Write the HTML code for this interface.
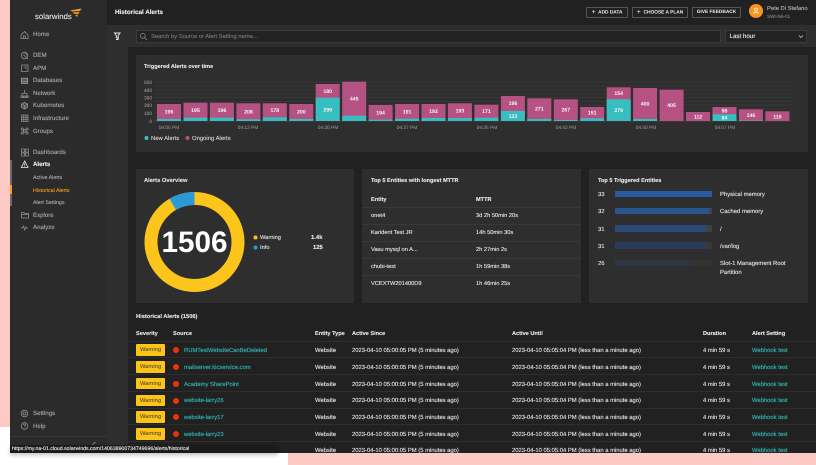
<!DOCTYPE html>
<html><head><meta charset="utf-8"><style>
*{box-sizing:border-box}
html,body{margin:0;padding:0;width:816px;height:465px;overflow:hidden;background:#fff;font-family:"Liberation Sans",sans-serif;text-rendering:geometricPrecision}
body{filter:blur(.25px)}
.a{position:absolute}
.t{position:absolute;white-space:nowrap;line-height:8px;height:8px;font-size:5.85px;color:#e8e8e8;margin-top:1.7px;-webkit-text-stroke:.1px currentColor}
.n{font-size:6.1px;color:#adadad;left:33px;margin-top:.8px}
.b{font-weight:bold}
.btn{position:absolute;top:7px;height:11px;border:1px solid #555;border-radius:1px;color:#eee;font-size:4.8px;font-weight:bold;line-height:9.5px;text-align:center;white-space:nowrap}
.btn span{font-size:7px;font-weight:normal;vertical-align:-.6px}
.panel{position:absolute;background:#2e2e2e}
.line{position:absolute;height:1px;background:#383838}
.r{position:absolute;left:128px;width:688px;height:17px;border-bottom:1px solid #2e2e2e}
.r .t{top:4.1px;font-size:5.85px}
.w{position:absolute;left:8px;top:3px;width:29px;height:11.5px;background:#fcc419;border-radius:1px;color:#333;font-size:5.7px;line-height:12px;text-align:center}
.d{position:absolute;left:45px;top:6px;width:6px;height:6px;border-radius:50%;background:#e8340c}
.l{color:#2fb3b0!important;-webkit-text-stroke:.16px #2fb3b0}
svg text{font-family:"Liberation Sans",sans-serif;text-rendering:geometricPrecision}
</style></head><body>
<div class="a" style="left:0;top:0;width:816px;height:465px;background:#fff"></div>
<div class="a" style="left:0;top:0;width:10px;height:427px;background:#fdc9c4"></div>
<div class="a" style="left:288px;top:453px;width:528px;height:12px;background:#fdc9c4"></div>
<div class="a" style="left:10px;top:0;width:806px;height:453px;overflow:hidden;background:#212121"></div>

<!-- sidebar -->
<div class="a" style="left:10px;top:0;width:97px;height:445px;background:#2b2b2b"></div>
<div class="a" style="left:10px;top:436px;width:97px;height:1px;background:#383838"></div>
<div class="a" style="left:107px;top:25px;width:21px;height:428px;background:#2e2e2e"></div>
<div class="a" style="left:10px;top:160px;width:2px;height:46px;background:#6a6a6a"></div>
<div class="a" style="left:10px;top:185px;width:2px;height:9px;background:#f99d1c"></div>

<div class="t" style="left:35px;top:11.5px;font-size:7.8px;color:#e6e6e6">solarwinds</div>
<svg class="a" style="left:69px;top:7px" width="14" height="12" viewBox="0 0 14 12"><path d="M1 3.500L12.500 1.500L11 4L3 4.500ZM3.500 5.500L10.500 5L9.500 7L5 6.800ZM6 8L9 7.800L8 10Z" fill="#f99d1c"/></svg>

<div class="t n" style="top:30px">Home</div>
<div class="t n" style="top:51px">DEM</div>
<div class="t n" style="top:64px">APM</div>
<div class="t n" style="top:76.5px">Databases</div>
<div class="t n" style="top:89px">Network</div>
<div class="t n" style="top:101.5px">Kubernetes</div>
<div class="t n" style="top:114px">Infrastructure</div>
<div class="t n" style="top:127px">Groups</div>
<div class="t n" style="top:148px">Dashboards</div>
<div class="t n b" style="top:160.5px;color:#eee">Alerts</div>
<div class="t n" style="top:173px;font-size:5.3px">Active Alerts</div>
<div class="t n" style="top:186px;font-size:5.3px;color:#f99d1c">Historical Alerts</div>
<div class="t n" style="top:198.5px;font-size:5.3px">Alert Settings</div>
<div class="t n" style="top:211px">Explore</div>
<div class="t n" style="top:223.5px">Analyze</div>
<div class="t n" style="top:409px">Settings</div>
<div class="t n" style="top:422px">Help</div>

<svg class="a" style="left:0;top:0" width="816" height="465" viewBox="0 0 816 465">
<g fill="none" stroke="#8e8e8e" stroke-width=".8">
<path d="M21 35L24.500 31.500L28 35V38.500H21ZM23.500 38.500V36H25.500V38.500"/>
<circle cx="24.500" cy="55.500" r="3.300"/><path d="M23 54.500L28 59M24.500 53.500a2 2 0 0 1 2 2"/>
<rect x="21.500" y="65" width="6.500" height="6.500"/><path d="M23.500 67H26V69.500"/>
<path d="M21.500 78.300h6v5h-6zM21.500 80h6M21.500 81.700h6" stroke-width="1.100"/>
<path d="M24.500 90v3M22 96v-2.500h5V96M21 96h2v1.500h-2zM23.800 96h1.600v1.500h-1.600zM26.200 96h2v1.500h-2z"/>
<path d="M24.500 102.500l3 1.500v3.500l-3 1.500-3-1.500v-3.500zM21.500 104l3 1.500 3-1.500M24.500 105.500v3.500" fill="#8e8e8e" fill-opacity=".4"/>
<path d="M21.500 115h6.500v6.500h-6.500zM21.500 117.200h6.500M21.500 119.400h6.500M23.700 115v6.500M25.900 115v6.500"/>
<circle cx="24.700" cy="131" r="1.300"/><circle cx="22.300" cy="129" r="1.100"/><circle cx="27" cy="129" r="1.100"/><circle cx="22.300" cy="133" r="1.100"/><circle cx="27" cy="133" r="1.100"/>
<path d="M21.500 149h3v3h-3zM25.500 149h3v3h-3zM21.500 153h3v3h-3zM25.500 153h3v3h-3z"/>
<path d="M24.700 161L28 167.500H21.300ZM24.700 163.300V165.500M24.700 166v.6" stroke="#eee"/>
<path d="M21.500 212.500h2.500l.7 1h3.800v4.500h-7zM21.500 214.500h7"/>
<path d="M21 228h1.500l1-2 1.300 4 1-3 .7 1H28"/>
<circle cx="24.500" cy="413.500" r="3.300"/><circle cx="24.500" cy="413.500" r="1.500"/>
<circle cx="24.500" cy="426" r="3.300"/><path d="M23.500 425a1 1 0 1 1 1.300 1l-.3.500M24.500 427.500v.4"/>
<path d="M92.500 444.500l3-2.500" stroke="#aaa"/>
</g>
</svg>

<!-- top bar -->
<div class="t b" style="left:115px;top:7.500px;font-size:6.3px;color:#eee">Historical Alerts</div>
<div class="btn" style="left:586px;width:42px"><span>+</span>&nbsp; ADD DATA</div>
<div class="btn" style="left:632px;width:56px"><span>+</span>&nbsp; CHOOSE A PLAN</div>
<div class="btn" style="left:692px;width:49px">GIVE FEEDBACK</div>
<div class="a" style="left:749px;top:4px;width:14px;height:14px;border-radius:50%;background:#f7941d"></div>
<svg class="a" style="left:752px;top:7px" width="8" height="8" viewBox="0 0 8 8"><circle cx="4" cy="2.600" r="1.500" fill="none" stroke="#fff" stroke-width=".7"/><path d="M1.800 7V5.500h4.400V7" fill="none" stroke="#fff" stroke-width=".7"/></svg>
<div class="t" style="left:767px;top:3.500px;font-size:5.800px;color:#bbb">Pete Di Stefano</div>
<div class="t" style="left:767px;top:11.500px;font-size:4.600px;color:#888">SWI-NA-01</div>

<!-- filter row -->
<div class="a" style="left:107px;top:25px;width:709px;height:22px;background:#2e2e2e"></div>
<svg class="a" style="left:0;top:0" width="816" height="60" viewBox="0 0 816 60"><path d="M114.500 33h5.500l-1.800 2.500v3l-1.900-.8v-2.200zM116 39.500h2.500" fill="none" stroke="#e8e8e8" stroke-width="1"/></svg>
<div class="a" style="left:136px;top:30px;width:585px;height:13px;background:#232323;border:1px solid #3a3a3a"></div>
<svg class="a" style="left:139px;top:32px" width="9" height="9" viewBox="0 0 9 9"><circle cx="3.800" cy="3.800" r="2.400" fill="none" stroke="#888" stroke-width=".8"/><path d="M5.600 5.600L8 8" stroke="#888" stroke-width=".8"/></svg>
<div class="t" style="left:151px;top:31.100px;font-size:5.800px;color:#7c7c7c">Search by Source or Alert Setting name...</div>
<div class="a" style="left:725px;top:30px;width:82px;height:13px;background:#232323;border:1px solid #3a3a3a"></div>
<div class="t" style="left:729.500px;top:31.100px;font-size:6.200px;color:#eee">Last hour</div>
<svg class="a" style="left:798px;top:34px" width="6" height="5" viewBox="0 0 6 5"><path d="M1 1.500L3 3.500L5 1.500" fill="none" stroke="#bbb" stroke-width=".8"/></svg>

<!-- panels -->
<div class="panel" style="left:136px;top:55px;width:672px;height:97px"></div>
<div class="panel" style="left:136px;top:169px;width:218px;height:134px"></div>
<div class="panel" style="left:362px;top:169px;width:219px;height:134px"></div>
<div class="panel" style="left:589px;top:169px;width:219px;height:134px"></div>

<div class="t b" style="left:144px;top:61.500px;font-size:5.600px">Triggered Alerts over time</div>
<div class="t b" style="left:144px;top:175px;font-size:5.750px">Alerts Overview</div>
<div class="t b" style="left:371px;top:175px;font-size:5.600px">Top 5 Entities with longest MTTR</div>
<div class="t b" style="left:598px;top:175px;font-size:5.600px">Top 5 Triggered Entities</div>

<svg class="a" style="left:0;top:0" width="816" height="465" viewBox="0 0 816 465">
<g stroke="#434343" stroke-width=".6">
<path d="M154 82H793M154 90H793M154 97.500H793M154 105H793M154 113H793"/>
<path d="M154 86H793M154 93.800H793M154 101.300H793M154 109H793M154 117H793" stroke="#3a3a3a"/>
<path d="M154 121H793" stroke="#555"/>
</g>
<g font-size="4.800" fill="#a8a8a8" text-anchor="end">
<text x="152" y="84">500</text><text x="152" y="92">400</text><text x="152" y="99.500">300</text><text x="152" y="107">200</text><text x="152" y="115">100</text><text x="152" y="123">0</text>
</g>
<g font-size="4.800" fill="#a0a0a0" text-anchor="middle">
<text x="169" y="129">04:05 PM</text><text x="248" y="129">04:12 PM</text><text x="328" y="129">04:20 PM</text><text x="407" y="129">04:27 PM</text><text x="487" y="129">04:35 PM</text><text x="566" y="129">04:42 PM</text><text x="646" y="129">04:50 PM</text><text x="725" y="129">04:57 PM</text>
</g>
<g fill="#b65283">
<rect x="157" y="104" width="24" height="17"/><rect x="183.500" y="102.700" width="24" height="18.300"/><rect x="209.900" y="102.700" width="24" height="18.300"/><rect x="236.400" y="103.300" width="24" height="17.700"/><rect x="262.800" y="103.300" width="24" height="17.700"/><rect x="289.300" y="104" width="24" height="17"/><rect x="315.700" y="84" width="24" height="37"/><rect x="342.200" y="81.700" width="24" height="39.300"/><rect x="368.600" y="105" width="24" height="16"/><rect x="395.100" y="104" width="24" height="17"/><rect x="421.500" y="104" width="24" height="17"/><rect x="447.900" y="103.300" width="24" height="17.700"/><rect x="474.400" y="104.700" width="24" height="16.300"/><rect x="500.900" y="96" width="24" height="25"/><rect x="527.300" y="98.300" width="24" height="22.700"/><rect x="553.800" y="99.300" width="24" height="21.700"/><rect x="580.200" y="107" width="24" height="14"/><rect x="606.700" y="87.300" width="24" height="33.700"/><rect x="633.100" y="88" width="24" height="33"/><rect x="659.600" y="89.700" width="24" height="31.300"/><rect x="686" y="112" width="24" height="9"/><rect x="712.500" y="107" width="24" height="14"/><rect x="738.900" y="109.300" width="24" height="11.700"/><rect x="765.400" y="111.300" width="24" height="9.700"/>
</g>
<g fill="#38bec0">
<rect x="157" y="119" width="24" height="2"/><rect x="183.500" y="117.700" width="24" height="3.300"/><rect x="209.900" y="117.700" width="24" height="3.300"/><rect x="236.400" y="119.300" width="24" height="1.700"/><rect x="262.800" y="117.300" width="24" height="3.700"/><rect x="289.300" y="119" width="24" height="2"/><rect x="315.700" y="97.700" width="24" height="23.300"/><rect x="342.200" y="115.700" width="24" height="5.300"/><rect x="368.600" y="119.700" width="24" height="1.300"/><rect x="395.100" y="118.700" width="24" height="2.300"/><rect x="421.500" y="118" width="24" height="3"/><rect x="447.900" y="118" width="24" height="3"/><rect x="474.400" y="117.700" width="24" height="3.300"/><rect x="500.900" y="111" width="24" height="10"/><rect x="527.300" y="119" width="24" height="2"/><rect x="553.800" y="120" width="24" height="1"/><rect x="580.200" y="118.300" width="24" height="2.700"/><rect x="606.700" y="99.300" width="24" height="21.700"/><rect x="633.100" y="119" width="24" height="2"/><rect x="712.500" y="114.300" width="24" height="6.700"/><rect x="738.900" y="120" width="24" height=".8" fill="#7a8a9a"/>
</g>
<g font-size="5.200" fill="#f4f4f4" text-anchor="middle" font-weight="bold">
<text x="169" y="113.500">196</text><text x="195.500" y="112">195</text><text x="222" y="112">196</text><text x="248.400" y="113.300">208</text><text x="274.800" y="112">178</text><text x="301.300" y="113.500">200</text><text x="327.700" y="92.800">180</text><text x="327.700" y="111.500">299</text><text x="354.200" y="100.500">445</text><text x="380.600" y="114.300">194</text><text x="407.100" y="113.300">191</text><text x="433.500" y="113">192</text><text x="459.900" y="112.700">193</text><text x="486.400" y="113">171</text><text x="512.900" y="105">196</text><text x="512.900" y="118">123</text><text x="539.300" y="110.500">271</text><text x="565.800" y="111.500">267</text><text x="592.200" y="114.500">151</text><text x="618.700" y="95">154</text><text x="618.700" y="112">279</text><text x="645.100" y="105.500">400</text><text x="671.600" y="107">405</text><text x="698" y="118.500">112</text><text x="724.500" y="112.700">98</text><text x="724.500" y="119.700">84</text><text x="750.900" y="117">146</text><text x="777.400" y="118.500">119</text>
</g>
<circle cx="146.500" cy="138" r="2" fill="#38bec0"/><circle cx="187.500" cy="138" r="2" fill="#b65283"/>
<circle cx="194.500" cy="242" r="43.500" fill="none" stroke="#fbc51c" stroke-width="13"/>
<path d="M194.500 198.500A43.500 43.500 0 0 0 172.750 204.330" fill="none" stroke="#2b9ad4" stroke-width="13"/>
<circle cx="255.500" cy="237.500" r="2" fill="#fbc51c"/><circle cx="255.500" cy="247.500" r="2" fill="#2b9ad4"/>
</svg>

<div class="t" style="left:151px;top:133.500px;font-size:5.900px;color:#d8d8d8">New Alerts</div>
<div class="t" style="left:192px;top:133.500px;font-size:5.900px;color:#d8d8d8">Ongoing Alerts</div>

<div class="a b" style="left:152px;top:227px;width:85px;text-align:center;font-size:29.700px;line-height:32px;color:#fff;font-weight:bold">1506</div>
<div class="t" style="left:260px;top:232.500px;font-size:5.700px">Warning</div>
<div class="t" style="left:260px;top:242.500px;font-size:5.700px">Info</div>
<div class="t b" style="left:311px;top:232.500px;font-size:5.900px">1.4k</div>
<div class="t b" style="left:313px;top:242.500px;font-size:5.900px">125</div>

<!-- MTTR -->
<div class="t b" style="left:371px;top:194.500px;font-size:5.600px">Entity</div>
<div class="t b" style="left:476px;top:194.500px;font-size:5.600px">MTTR</div>
<div class="line" style="left:362px;top:207px;width:219px"></div>
<div class="line" style="left:362px;top:224px;width:219px"></div>
<div class="line" style="left:362px;top:241px;width:219px"></div>
<div class="line" style="left:362px;top:258px;width:219px"></div>
<div class="line" style="left:362px;top:275px;width:219px"></div>
<div class="t" style="left:371px;top:210px;font-size:5.700px">onet4</div><div class="t" style="left:476px;top:210.500px;font-size:5.700px">3d 2h 50min 20s</div>
<div class="t" style="left:371px;top:227px;font-size:5.700px">Karident Test JR</div><div class="t" style="left:476px;top:227.500px;font-size:5.700px">14h 50min 30s</div>
<div class="t" style="left:371px;top:244px;font-size:5.700px">Vasu mysql on A...</div><div class="t" style="left:476px;top:244.500px;font-size:5.700px">2h 27min 2s</div>
<div class="t" style="left:371px;top:261px;font-size:5.700px">chubi-test</div><div class="t" style="left:476px;top:261.500px;font-size:5.700px">1h 59min 38s</div>
<div class="t" style="left:371px;top:278px;font-size:5.700px">VCEXTW201400D9</div><div class="t" style="left:476px;top:278.500px;font-size:5.700px">1h 46min 25s</div>

<!-- Top 5 -->
<div class="a" style="left:615px;top:190.500px;width:97px;height:6.500px;background:#2a5b9e"></div>
<div class="a" style="left:615px;top:207.500px;width:97px;height:6.500px;background:#444"></div><div class="a" style="left:615px;top:207.500px;width:94px;height:6.500px;background:#2a558f"></div>
<div class="a" style="left:615px;top:225px;width:97px;height:6.500px;background:#404040"></div><div class="a" style="left:615px;top:225px;width:91px;height:6.500px;background:#2c4a78"></div>
<div class="a" style="left:615px;top:242px;width:97px;height:6.500px;background:#383838"></div><div class="a" style="left:615px;top:242px;width:91px;height:6.500px;background:#2a3b5c"></div>
<div class="a" style="left:615px;top:259.500px;width:97px;height:6.500px;background:#333"></div><div class="a" style="left:615px;top:259.500px;width:77px;height:6.500px;background:#2f3541"></div>
<div class="t" style="left:598px;top:189.500px;font-size:5.900px">33</div><div class="t" style="left:720px;top:189.500px;font-size:5.900px">Physical memory</div>
<div class="t" style="left:598px;top:206.500px;font-size:5.900px">32</div><div class="t" style="left:720px;top:206.500px;font-size:5.900px">Cached memory</div>
<div class="t" style="left:598px;top:224px;font-size:5.900px">31</div><div class="t" style="left:720px;top:224px;font-size:5.900px">/</div>
<div class="t" style="left:598px;top:241px;font-size:5.900px">31</div><div class="t" style="left:720px;top:241px;font-size:5.900px">/var/log</div>
<div class="t" style="left:598px;top:258.500px;font-size:5.900px">26</div><div class="t" style="left:720px;top:258.500px;font-size:5.900px">Slot-1 Management Root</div>
<div class="t" style="left:720px;top:267.500px;font-size:5.900px">Partition</div>

<!-- table -->
<div class="t b" style="left:136px;top:311.500px;font-size:5.700px">Historical Alerts (1506)</div>
<div class="t b" style="left:136px;top:328.500px;font-size:5.600px">Severity</div>
<div class="t b" style="left:173px;top:328.500px;font-size:5.600px">Source</div>
<div class="t b" style="left:315px;top:328.500px;font-size:5.600px">Entity Type</div>
<div class="t b" style="left:352px;top:328.500px;font-size:5.600px">Active Since</div>
<div class="t b" style="left:512px;top:328.500px;font-size:5.600px">Active Until</div>
<div class="t b" style="left:703px;top:328.500px;font-size:5.600px">Duration</div>
<div class="t b" style="left:752px;top:328.500px;font-size:5.600px">Alert Setting</div>
<div class="line" style="left:128px;top:341px;width:688px;background:#2e2e2e"></div>

<div class="r" style="top:341px"><div class="w">Warning</div><div class="d"></div><div class="t l" style="left:56px">RUMTestWebsiteCanBeDeleted</div><div class="t" style="left:187px">Website</div><div class="t" style="left:224px">2023-04-10 05:00:05 PM (5 minutes ago)</div><div class="t" style="left:384px">2023-04-10 05:05:04 PM (less than a minute ago)</div><div class="t" style="left:575px">4 min 59 s</div><div class="t l" style="left:624px">Webhook test</div></div>
<div class="r" style="top:358px"><div class="w">Warning</div><div class="d"></div><div class="t l" style="left:56px">mailserver.kicservice.com</div><div class="t" style="left:187px">Website</div><div class="t" style="left:224px">2023-04-10 05:00:05 PM (5 minutes ago)</div><div class="t" style="left:384px">2023-04-10 05:05:04 PM (less than a minute ago)</div><div class="t" style="left:575px">4 min 59 s</div><div class="t l" style="left:624px">Webhook test</div></div>
<div class="r" style="top:374.800px"><div class="w">Warning</div><div class="d"></div><div class="t l" style="left:56px">Academy SharePoint</div><div class="t" style="left:187px">Website</div><div class="t" style="left:224px">2023-04-10 05:00:05 PM (5 minutes ago)</div><div class="t" style="left:384px">2023-04-10 05:05:04 PM (less than a minute ago)</div><div class="t" style="left:575px">4 min 59 s</div><div class="t l" style="left:624px">Webhook test</div></div>
<div class="r" style="top:391.600px"><div class="w">Warning</div><div class="d"></div><div class="t l" style="left:56px">website-larry26</div><div class="t" style="left:187px">Website</div><div class="t" style="left:224px">2023-04-10 05:00:05 PM (5 minutes ago)</div><div class="t" style="left:384px">2023-04-10 05:05:04 PM (less than a minute ago)</div><div class="t" style="left:575px">4 min 59 s</div><div class="t l" style="left:624px">Webhook test</div></div>
<div class="r" style="top:408.400px"><div class="w">Warning</div><div class="d"></div><div class="t l" style="left:56px">website-larry17</div><div class="t" style="left:187px">Website</div><div class="t" style="left:224px">2023-04-10 05:00:05 PM (5 minutes ago)</div><div class="t" style="left:384px">2023-04-10 05:05:04 PM (less than a minute ago)</div><div class="t" style="left:575px">4 min 59 s</div><div class="t l" style="left:624px">Webhook test</div></div>
<div class="r" style="top:425.200px"><div class="w">Warning</div><div class="d"></div><div class="t l" style="left:56px">website-larry23</div><div class="t" style="left:187px">Website</div><div class="t" style="left:224px">2023-04-10 05:00:05 PM (5 minutes ago)</div><div class="t" style="left:384px">2023-04-10 05:05:04 PM (less than a minute ago)</div><div class="t" style="left:575px">4 min 59 s</div><div class="t l" style="left:624px">Webhook test</div></div>
<div class="a" style="left:128px;top:442px;width:688px;height:11px;overflow:hidden"><div class="t" style="left:187px;top:3.100px">Website</div><div class="t" style="left:224px;top:3.100px">2023-04-10 05:00:05 PM (5 minutes ago)</div><div class="t" style="left:384px;top:3.100px">2023-04-10 05:05:04 PM (less than a minute ago)</div><div class="t" style="left:575px;top:3.100px">4 min 59 s</div><div class="t l" style="left:624px;top:3.100px">Webhook test</div></div>

<!-- status tooltip -->
<div class="a" style="left:10px;top:445px;width:268px;height:8px;background:#1b1b1b;box-shadow:0 2px 4px rgba(0,0,0,.25)"></div>
<div class="t" style="left:12px;top:443.600px;font-size:5.200px;color:#eee">https://my.na-01.cloud.solarwinds.com/140638900734749696/alerts/historical</div>
</body></html>
